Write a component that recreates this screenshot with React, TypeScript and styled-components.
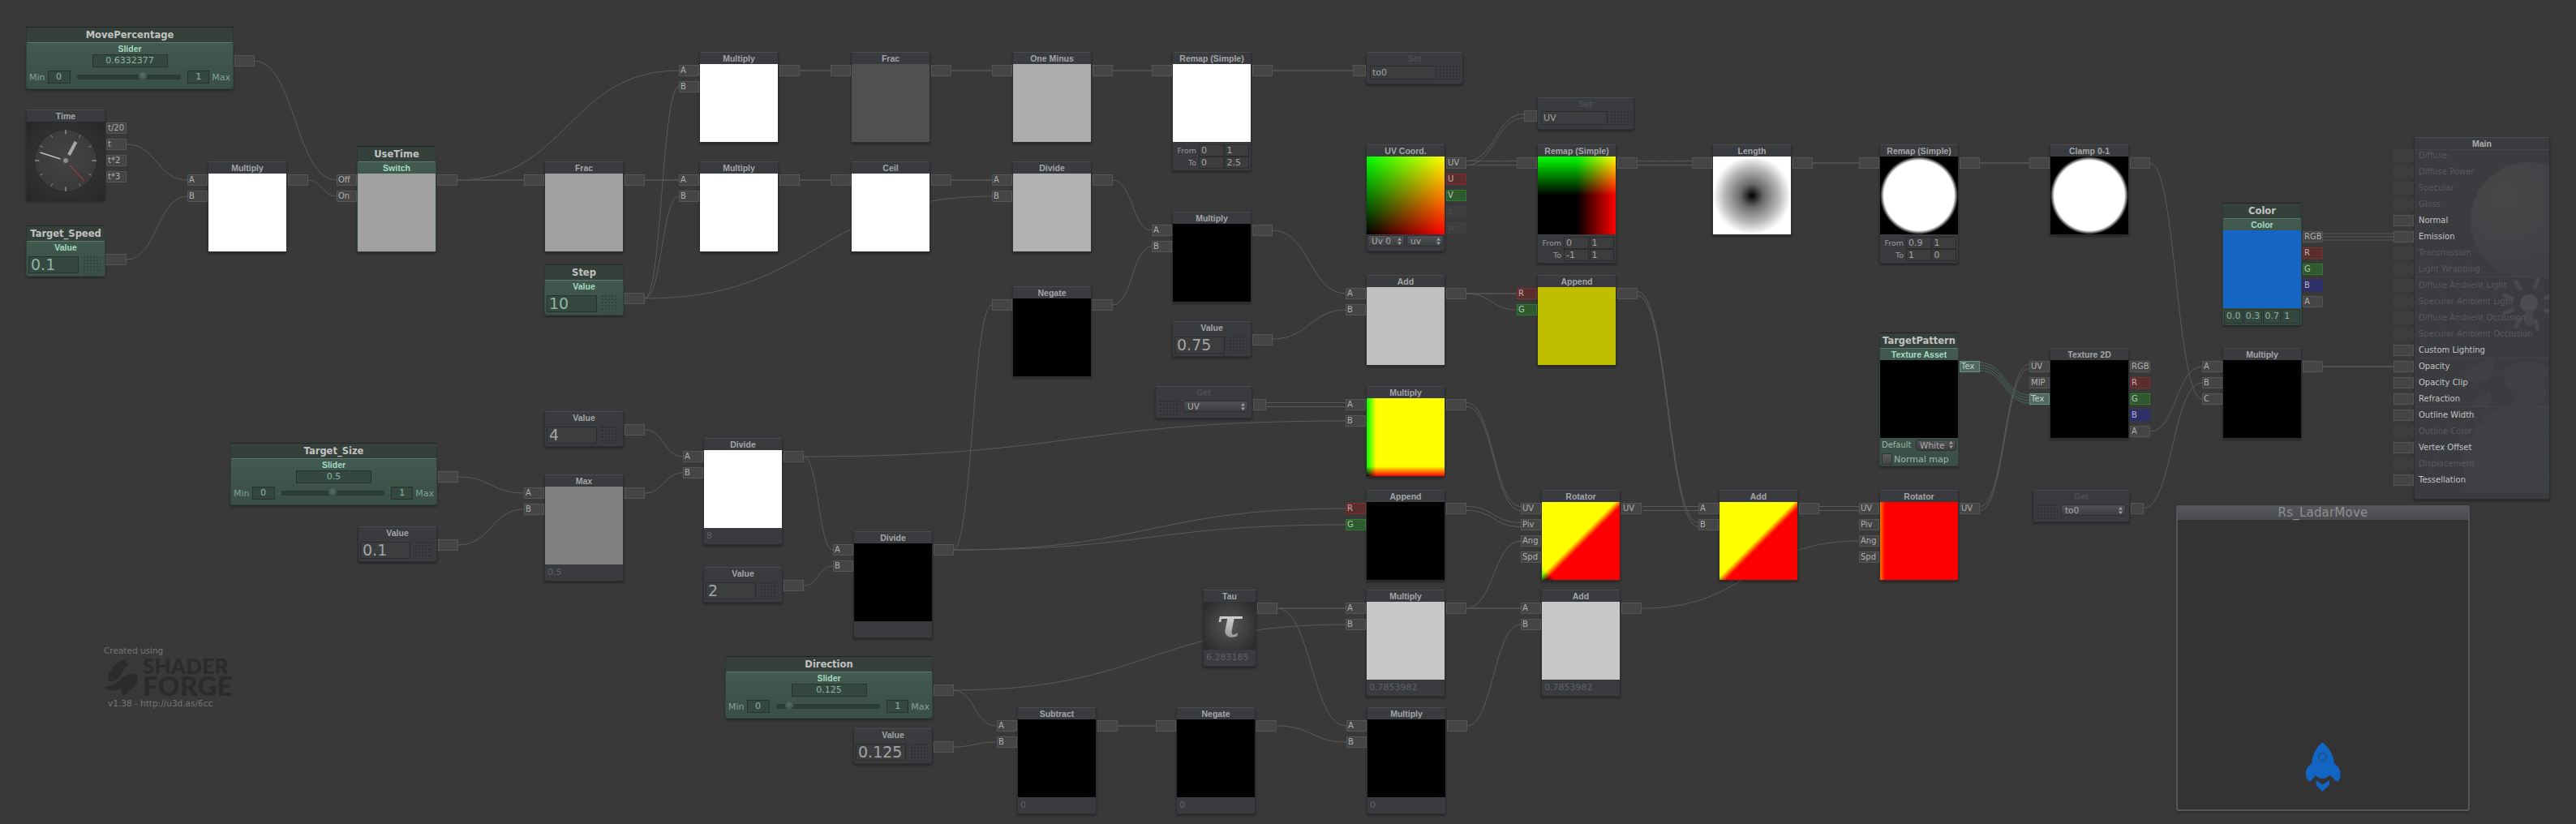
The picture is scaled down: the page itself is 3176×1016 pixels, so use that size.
import React from "react";
import styled, { createGlobalStyle, css } from "styled-components";

const Global = createGlobalStyle`
  html, body {
    margin: 0;
    background: #393939;
  }
`;

const Canvas = styled.div`
  position: relative;
  width: 3176px;
  height: 1016px;
  overflow: hidden;
  background: #393939;
  font-family: "DejaVu Sans", sans-serif;
  font-size: 10px;
  color: #a8a8a8;
`;

const WireLayer = styled.svg`
  position: absolute;
  left: 0;
  top: 0;
`;

const Card = styled.div<{ $x: number; $y: number; $w?: number; $prop?: boolean }>`
  position: absolute;
  left: ${(p) => p.$x}px;
  top: ${(p) => p.$y}px;
  width: ${(p) => p.$w ?? 98}px;
  box-sizing: border-box;
  border: 1px solid #2e2f31;
  border-top-color: #4a4c50;
  border-radius: 3px;
  background: #393b3f;
  box-shadow: 0 2px 3px rgba(0, 0, 0, 0.35);
  ${(p) =>
    p.$prop &&
    css`
      border-color: #32463f;
      border-top-color: #5d7a70;
      background: linear-gradient(#42594f, #3a4f47);
    `}
`;

const TitleBar = styled.div`
  position: absolute;
  left: -1px;
  right: -1px;
  bottom: 100%;
  margin-bottom: 1px;
  height: 19px;
  box-sizing: border-box;
  border-top: 1px solid #1f2522;
  border-left: 1px solid #2e3632;
  border-right: 1px solid #2e3632;
  background: #36403b;
  color: #c2c2c2;
  font-weight: bold;
  font-size: 11.5px;
  line-height: 19px;
  text-align: center;
  white-space: nowrap;
`;

const Head = styled.div<{ $prop?: boolean; $dim?: boolean }>`
  height: 14px;
  line-height: 14px;
  text-align: center;
  white-space: nowrap;
  font-family: "Liberation Sans", sans-serif;
  font-weight: bold;
  font-size: 10.5px;
  color: ${(p) => (p.$prop ? "#a5dcc4" : p.$dim ? "#4d4f53" : "#a4a5a7")};
`;

const Preview = styled.div<{ $bg: string; $blend?: boolean }>`
  height: 96px;
  background: ${(p) => p.$bg};
  ${(p) => p.$blend && "background-blend-mode: screen;"}
`;

const FootNote = styled.div`
  height: 20px;
  padding-left: 3px;
  line-height: 20px;
  font-size: 11px;
  color: #5f6164;
  white-space: nowrap;
`;

const Ports = styled.div<{ $side: "in" | "out" }>`
  position: absolute;
  top: 15px;
  display: flex;
  flex-direction: column;
  gap: 6px;
  ${(p) => (p.$side === "in" ? "right: calc(100% + 1px);" : "left: calc(100% + 2px);")}
`;

const toneStyles: Record<string, string> = {
  plain: "background:#454545;border-color:#555;color:#b0b0b0;",
  red: "background:#5b2d2d;border-color:#7b2f2f;color:#c4b0b0;",
  green: "background:#2f5a30;border-color:#2d7d2f;color:#b4c8b4;",
  blue: "background:#2d2f66;border-color:#2a2e82;color:#b4b4cc;",
  dim: "background:#3d3d3d;border-color:#414141;color:#505050;",
  tex: "background:#4e6a60;border-color:#6f8f83;color:#c4d0cb;",
};

const Port = styled.div<{ $tone?: string; $narrow?: boolean }>`
  box-sizing: border-box;
  width: ${(p) => (p.$narrow ? 16 : 25)}px;
  height: 14px;
  padding-left: 1px;
  border: 1px solid;
  line-height: 12px;
  font-size: 10px;
  white-space: nowrap;
  ${(p) => toneStyles[p.$tone ?? "plain"]}
`;

const Rows = styled.div`
  display: flex;
  flex-direction: column;
  box-sizing: border-box;
  padding-top: 3px;
  height: 35px;
`;

const RemapRow = styled.div`
  display: flex;
  align-items: center;
  gap: 1px;
  padding-right: 2px;
`;

const RemapLabel = styled.span`
  width: 31px;
  padding-right: 2px;
  box-sizing: border-box;
  text-align: right;
  font-size: 9.5px;
  color: #9a9a9a;
`;

const Field = styled.div<{ $prop?: boolean; $w?: number; $h?: number; $size?: number; $center?: boolean }>`
  box-sizing: border-box;
  flex: ${(p) => (p.$w ? "none" : 1)};
  width: ${(p) => (p.$w ? `${p.$w}px` : "auto")};
  height: ${(p) => p.$h ?? 15}px;
  padding-left: ${(p) => (p.$center ? 0 : 2)}px;
  border: 1px solid ${(p) => (p.$prop ? "#25322d" : "#2a2b2d")};
  background: ${(p) => (p.$prop ? "#354840" : "#3c3d3f")};
  color: ${(p) => (p.$prop ? "#8db5a3" : "#a4a4a4")};
  font-size: ${(p) => p.$size ?? 11}px;
  line-height: ${(p) => (p.$h ?? 15) - 2}px;
  text-align: ${(p) => (p.$center ? "center" : "left")};
  white-space: nowrap;
`;

const ValueRow = styled.div`
  display: flex;
  height: 28px;
  padding: 4px 5px 3px 2px;
  box-sizing: border-box;
  gap: 6px;
`;

const SetRow = styled.div<{ $flip?: boolean }>`
  display: flex;
  gap: 4px;
  height: 24px;
  box-sizing: border-box;
  padding: 2px 3px 3px 4px;
  ${(p) => p.$flip && "padding: 3px 4px 3px 5px;"}
`;

const Dots = styled.div<{ $prop?: boolean; $w: number }>`
  flex: none;
  width: ${(p) => p.$w}px;
  background-image: radial-gradient(circle at 1px 1px, ${(p) => (p.$prop ? "#2f433b" : "#2e2f31")} 0.8px, transparent 1px);
  background-size: 4px 4px;
`;

const Dropdown = styled.div<{ $w?: number }>`
  display: flex;
  align-items: center;
  justify-content: space-between;
  box-sizing: border-box;
  flex: ${(p) => (p.$w ? "none" : 1)};
  width: ${(p) => (p.$w ? `${p.$w}px` : "auto")};
  height: 14px;
  padding: 0 3px 0 4px;
  border: 1px solid #2e2f31;
  border-radius: 3px;
  background: linear-gradient(#505154, #3d3e40);
  color: #ababab;
  font-size: 10.5px;
  line-height: 12px;
  white-space: nowrap;
`;

const UvFoot = styled.div`
  display: flex;
  gap: 2px;
  height: 20px;
  padding: 1px 1px 0;
  box-sizing: border-box;
`;

const ColorFoot = styled.div`
  display: flex;
  gap: 1px;
  height: 20px;
  padding: 1px 1px 0;
  box-sizing: border-box;
`;

const TextureFoot = styled.div`
  display: flex;
  flex-direction: column;
  height: 34px;
  padding: 1px 2px 0 2px;
  box-sizing: border-box;
  color: #9fb6ac;
`;

const TextureRow = styled.div`
  display: flex;
  align-items: center;
  justify-content: space-between;
  height: 15px;
`;

const CheckRow = styled.div`
  display: flex;
  align-items: center;
  gap: 2px;
  margin-top: 3px;
  font-size: 11px;
`;

const CheckBox = styled.span`
  width: 11px;
  height: 12px;
  border: 1px solid #2d3330;
  border-radius: 2px;
  background: linear-gradient(#5a5c5e, #434547);
`;

const SliderBody = styled.div`
  display: flex;
  flex-direction: column;
  align-items: center;
  height: 42px;
  box-sizing: border-box;
`;

const SliderRow = styled.div`
  align-self: stretch;
  display: flex;
  align-items: center;
  gap: 3px;
  margin-top: 4px;
  padding: 0 3px;
  color: #7ea494;
  font-size: 11px;
`;

const Track = styled.div`
  position: relative;
  flex: 1;
  height: 4px;
  margin: 0 5px;
  border-radius: 2px;
  background: #2d3d37;
  border: 1px solid #2a3833;
`;

const Knob = styled.div<{ $at: number }>`
  position: absolute;
  top: -4px;
  left: calc(${(p) => p.$at * 100}% - 5px);
  width: 10px;
  height: 10px;
  border-radius: 50%;
  background: radial-gradient(circle at 50% 35%, #587066, #34453e);
`;

const ClockFace = styled.div`
  height: 96px;
  background: radial-gradient(circle at 50% 50%, #3f3f3f, #262626);
`;

const TauFace = styled.div`
  display: flex;
  align-items: center;
  justify-content: center;
  height: 59px;
  background: radial-gradient(circle, #525252 10%, #2c2c2c 90%);
`;

const TauGlyph = styled.span`
  font-family: "DejaVu Serif", serif;
  font-weight: bold;
  font-style: italic;
  font-size: 48px;
  line-height: 1;
  margin-top: -8px;
  color: transparent;
  background: linear-gradient(#f4f4f4, #8c8c8c);
  -webkit-background-clip: text;
  background-clip: text;
`;

const MainPanel = styled(Card)`
  background: #3a3c3f;
`;

const MainArt = styled.svg`
  position: absolute;
  left: 0;
  top: 0;
`;

const MainHead = styled(Head)`
  position: relative;
  color: #b0b0b0;
`;

const MainRows = styled.div`
  position: relative;
  padding: 1px 0 10px 5px;
`;

const MainRow = styled.div<{ $on?: boolean }>`
  height: 20px;
  line-height: 14px;
  white-space: nowrap;
  color: ${(p) => (p.$on ? "#c4c4c4" : "#585a5d")};
`;

const Monitor = styled.div`
  position: absolute;
  left: 2683px;
  top: 623px;
  width: 362px;
  height: 377px;
  box-sizing: border-box;
  display: flex;
  flex-direction: column;
  border: 2px solid #55565a;
  border-radius: 3px;
  background: #333;
  box-shadow: 0 1px 3px rgba(0, 0, 0, 0.3);
`;

const MonitorHead = styled.div`
  height: 16px;
  line-height: 14px;
  text-align: center;
  background: linear-gradient(#55565a, #4a4b4e);
  color: #8e8f90;
  font-size: 15px;
  letter-spacing: 0.2px;
`;

const MonitorBody = styled.div`
  flex: 1;
  display: flex;
  align-items: flex-end;
  justify-content: center;
  padding: 0 0 21px 0;
`;

const Credit = styled.div`
  position: absolute;
  left: 128px;
  top: 796px;
  width: 170px;
  color: #757575;
  font-size: 10.5px;
`;

const LogoRow = styled.div`
  display: flex;
  gap: 4px;
  margin: 3px 0 2px;
`;

const LogoText = styled.div`
  display: flex;
  flex-direction: column;
  color: #2b2b2b;
  font-family: "Lato", sans-serif;
  font-weight: 900;
`;

const LogoShader = styled.span`
  font-size: 26px;
  line-height: 21px;
  letter-spacing: 0.2px;
`;

const LogoForge = styled.span`
  font-size: 33px;
  line-height: 27px;
  letter-spacing: 0.4px;
`;

const CreditUrl = styled.div`
  padding-left: 5px;
  white-space: nowrap;
`;

const SpinnerIcon = () => (
  <svg width="5" height="9" viewBox="0 0 5 9">
    <path d="M2.5 0 L5 3.5 H0 Z M2.5 9 L0 5.5 H5 Z" fill="#a0a0a0" />
  </svg>
);

type P = { l?: string; t?: string; n?: boolean };

const PortList = ({ side, items }: { side: "in" | "out"; items: P[] }) => (
  <Ports $side={side}>
    {items.map((it, i) => (
      <Port key={i} $tone={it.t} $narrow={it.n}>
        {it.l}
      </Port>
    ))}
  </Ports>
);

const p = (l?: string, t?: string): P => ({ l, t });
const AB = [p("A"), p("B")];
const IN = [p()];
const OUT = [p()];
const RG = [p("R", "red"), p("G", "green")];
const ROT = [p("UV"), p("Piv"), p("Ang"), p("Spd")];

type NodeProps = {
  x: number;
  y: number;
  head: string;
  bg: string;
  blend?: boolean;
  inputs?: P[];
  outputs?: P[];
  foot?: string;
  prop?: string;
  children?: React.ReactNode;
};

const ShaderNode = ({ x, y, head, bg, blend, inputs, outputs = OUT, foot, prop, children }: NodeProps) => (
  <Card $x={x} $y={y} $prop={!!prop}>
    {prop && <TitleBar>{prop}</TitleBar>}
    <Head $prop={!!prop}>{head}</Head>
    <Preview $bg={bg} $blend={blend} />
    {foot !== undefined && <FootNote>{foot}</FootNote>}
    {children}
    {inputs && <PortList side="in" items={inputs} />}
    {outputs.length > 0 && <PortList side="out" items={outputs} />}
  </Card>
);

const Remap = ({ x, y, bg, blend, vals }: { x: number; y: number; bg: string; blend?: boolean; vals: string[] }) => (
  <ShaderNode x={x} y={y} head="Remap (Simple)" bg={bg} blend={blend} inputs={IN}>
    <Rows>
      <RemapRow>
        <RemapLabel>From</RemapLabel>
        <Field>{vals[0]}</Field>
        <Field>{vals[1]}</Field>
      </RemapRow>
      <RemapRow>
        <RemapLabel>To</RemapLabel>
        <Field>{vals[2]}</Field>
        <Field>{vals[3]}</Field>
      </RemapRow>
    </Rows>
  </ShaderNode>
);

const ValueNode = ({ x, y, value, name }: { x: number; y: number; value: string; name?: string }) => (
  <Card $x={x} $y={y} $prop={!!name}>
    {name && <TitleBar>{name}</TitleBar>}
    <Head $prop={!!name}>Value</Head>
    <ValueRow>
      <Field $prop={!!name} $w={62} $h={21} $size={19}>
        {value}
      </Field>
      <Dots $prop={!!name} $w={21} />
    </ValueRow>
    <PortList side="out" items={OUT} />
  </Card>
);

const SliderNode = ({ x, y, w, name, value, at }: { x: number; y: number; w: number; name: string; value: string; at: number }) => (
  <Card $x={x} $y={y} $w={w} $prop>
    <TitleBar>{name}</TitleBar>
    <Head $prop>Slider</Head>
    <SliderBody>
      <Field $prop $w={93} $h={16} $center>
        {value}
      </Field>
      <SliderRow>
        Min
        <Field $prop $w={28} $h={16} $center>
          0
        </Field>
        <Track>
          <Knob $at={at} />
        </Track>
        <Field $prop $w={27} $h={16} $center>
          1
        </Field>
        Max
      </SliderRow>
    </SliderBody>
    <PortList side="out" items={OUT} />
  </Card>
);

const SetNode = ({ x, y, value }: { x: number; y: number; value: string }) => (
  <Card $x={x} $y={y} $w={120}>
    <Head $dim>Set</Head>
    <SetRow>
      <Field $w={82} $h={17}>
        {value}
      </Field>
      <Dots $w={25} />
    </SetRow>
    <PortList side="in" items={[{ n: true }]} />
  </Card>
);

const GetNode = ({ x, y, value }: { x: number; y: number; value: string }) => (
  <Card $x={x} $y={y} $w={120}>
    <Head $dim>Get</Head>
    <SetRow $flip>
      <Dots $w={25} />
      <Dropdown>
        {value}
        <SpinnerIcon />
      </Dropdown>
    </SetRow>
    <PortList side="out" items={[{ n: true }]} />
  </Card>
);

const ClockDrawing = () => (
  <svg width="96" height="96" viewBox="0 0 96 96">
    <defs>
      <radialGradient id="dial" cx="50%" cy="45%" r="55%">
        <stop offset="0" stopColor="#444" />
        <stop offset="1" stopColor="#3a3a3a" />
      </radialGradient>
    </defs>
    <circle cx="48" cy="48" r="38.5" fill="url(#dial)" stroke="#2c2c2c" strokeWidth="1.5" />
    {Array.from({ length: 12 }).map((_, i) => (
      <line
        key={i}
        x1="48"
        y1={i % 3 === 0 ? 10 : 11.5}
        x2="48"
        y2="15.5"
        stroke={i % 3 === 0 ? "#b4b4b4" : "#7c7c7c"}
        strokeWidth="1"
        transform={`rotate(${i * 30} 48 48)`}
      />
    ))}
    <line x1="52" y1="41" x2="60.5" y2="25" stroke="#a8a8a8" strokeWidth="4" />
    <line x1="41.5" y1="46" x2="16.5" y2="38" stroke="#bbb" strokeWidth="1.8" />
    <line x1="53" y1="54" x2="71" y2="73" stroke="#cc3a3a" strokeWidth="1" />
    <circle cx="48" cy="48" r="3" fill="#8a8a8a" />
  </svg>
);

const MainDrawing = () => (
  <MainArt width="166" height="438" viewBox="0 0 166 438">
    <defs>
      <radialGradient id="ball" cx="30%" cy="30%" r="80%">
        <stop offset="0" stopColor="#454749" />
        <stop offset="1" stopColor="#3d3f42" />
      </radialGradient>
      <clipPath id="c1">
        <rect x="0" y="15" width="166" height="156" />
      </clipPath>
      <clipPath id="c2">
        <rect x="0" y="172" width="166" height="99" />
      </clipPath>
      <clipPath id="c3">
        <rect x="0" y="272" width="166" height="59" />
      </clipPath>
      <clipPath id="c4">
        <rect x="0" y="332" width="166" height="106" />
      </clipPath>
    </defs>
    <circle cx="141" cy="102" r="72" fill="url(#ball)" clipPath="url(#c1)" />
    <g clipPath="url(#c2)" stroke="#484a4d" strokeLinecap="round">
      {[-110, -70, -30, 20, 70, 110, 160, -150].map((a) => (
        <line key={a} x1="141" y1="183" x2="141" y2="173" strokeWidth="5" transform={`rotate(${a} 141 205)`} />
      ))}
      <circle cx="141" cy="204" r="11" fill="#4b4d50" stroke="none" />
      <rect x="136" y="212" width="10" height="20" rx="4" fill="#45474a" stroke="none" />
    </g>
    <g clipPath="url(#c3)" fill="#3f4144">
      <path d="M60 295 C70 278 85 276 98 272 C100 288 92 300 74 304 Z" />
      <path d="M110 286 C125 272 150 272 166 285 C160 310 130 318 112 306 Z" />
      <path d="M70 331 C78 318 86 316 92 312 C98 322 96 328 90 331 Z" />
      <path d="M120 331 C124 310 140 302 160 304 C166 318 160 326 150 331 Z" />
    </g>
    <g clipPath="url(#c4)" fill="none" stroke="#47494c" strokeWidth="0.6">
      <circle cx="150" cy="410" r="90" fill="#3e4043" stroke="none" />
      {Array.from({ length: 9 }).map((_, i) => (
        <path key={i} d={`M${70 + i * 12} 335 Q ${95 + i * 12} 395 ${60 + i * 14} 438`} />
      ))}
      {Array.from({ length: 9 }).map((_, i) => (
        <path key={i} d={`M60 ${350 + i * 12} Q 120 ${330 + i * 12} 166 ${370 + i * 10}`} />
      ))}
    </g>
    <path d="M0 171.5H166M0 271.5H166M0 331.5H166M0 14.5H166" stroke="#434549" strokeWidth="1" />
  </MainArt>
);

const MAIN_ROWS: [string, boolean][] = [
  ["Diffuse", false],
  ["Diffuse Power", false],
  ["Specular", false],
  ["Gloss", false],
  ["Normal", true],
  ["Emission", true],
  ["Transmission", false],
  ["Light Wrapping", false],
  ["Diffuse Ambient Light", false],
  ["Specular Ambient Light", false],
  ["Diffuse Ambient Occlusion", false],
  ["Specular Ambient Occlusion", false],
  ["Custom Lighting", true],
  ["Opacity", true],
  ["Opacity Clip", true],
  ["Refraction", true],
  ["Outline Width", true],
  ["Outline Color", false],
  ["Vertex Offset", true],
  ["Displacement", false],
  ["Tessellation", true],
];

const LogoMark = () => (
  <svg width="44" height="48" viewBox="0 0 44 48">
    <path
      d="M36 2 C24 1 15 6 10 14 C5 20 3 26 7 29 C12 31 19 26 22 20 C24 15 25 11 30 9 L36 2 Z M26 1 L36 2 L29 8 Z"
      fill="#2b2b2b"
    />
    <path
      d="M0 36 C8 35 14 33 20 27 C26 21 34 18 40 21 C44 25 42 32 36 37 C30 42 27 46 24 47 L21 38 C14 42 6 41 0 36 Z"
      fill="#2b2b2b"
    />
  </svg>
);

const RocketIcon = () => (
  <svg width="44" height="63" viewBox="0 0 44 63">
    <path
      d="M21.3 1 C14 7 8 17 8 30 C8 38 14 46 21.3 46 C29 46 36 38 36 30 C36 17 29 7 21.3 1 Z"
      fill="#1365c4"
    />
    <path d="M8 27 C3 31 0 35 1 42 C2 48 4 50 7 49 L13 42 Z" fill="#1365c4" />
    <path d="M36 27 C41 31 44 35 43.5 42 C43 48 41 50 38 49 L31 42 Z" fill="#1365c4" />
    <path d="M13.5 48 L21.3 53.5 L30 48 L30 54 L21 62 L13.5 54 Z" fill="#1365c4" />
    <circle cx="21.5" cy="19.5" r="4.8" fill="none" stroke="#2a3f5c" strokeWidth="1" />
  </svg>
);

// wires, as [from x, from y, to x, to y, lines]
const WIRES: number[][] = [
  [313, 75, 415, 222, 1],
  [156, 178, 231, 222, 1],
  [156, 320, 231, 242, 1],
  [380, 222, 415, 242, 1],
  [564, 222, 837, 87, 1],
  [564, 222, 646, 222, 1],
  [795, 222, 837, 222, 1],
  [795, 368, 837, 107, 1],
  [795, 368, 837, 242, 1],
  [795, 368, 1223, 242, 1],
  [986, 87, 1024, 87, 1],
  [1172, 87, 1223, 87, 1],
  [1372, 87, 1420, 87, 1],
  [1569, 87, 1668, 87, 1],
  [986, 222, 1024, 222, 1],
  [1172, 222, 1223, 222, 1],
  [1372, 222, 1420, 284, 1],
  [1372, 376, 1420, 304, 1],
  [1569, 284, 1660, 362, 1],
  [1569, 418, 1660, 382, 1],
  [1808, 201, 1879, 143, 2],
  [1808, 201, 1870, 201, 2],
  [2019, 201, 2087, 201, 2],
  [2235, 201, 2292, 201, 1],
  [2441, 201, 2502, 201, 1],
  [2651, 201, 2715, 492, 1],
  [1808, 362, 1870, 362, 1],
  [1808, 362, 1870, 382, 1],
  [2019, 362, 2094, 647, 2],
  [1560, 499, 1660, 499, 2],
  [991, 563, 1660, 519, 1],
  [565, 588, 646, 608, 1],
  [565, 672, 646, 628, 1],
  [795, 530, 842, 563, 1],
  [795, 608, 842, 583, 1],
  [991, 563, 1027, 678, 1],
  [991, 722, 1027, 698, 1],
  [1175, 678, 1660, 627, 1],
  [1175, 678, 1660, 647, 1],
  [1175, 678, 1223, 376, 1],
  [1175, 851, 1660, 770, 1],
  [1175, 851, 1228, 895, 1],
  [1175, 921, 1228, 915, 1],
  [1377, 895, 1425, 895, 1],
  [1575, 895, 1660, 915, 1],
  [1574, 750, 1660, 750, 1],
  [1574, 750, 1660, 895, 1],
  [1808, 499, 1875, 627, 2],
  [1808, 627, 1875, 647, 2],
  [1808, 750, 1875, 667, 1],
  [1808, 750, 1875, 750, 1],
  [1808, 895, 1875, 770, 1],
  [2025, 627, 2094, 627, 2],
  [2243, 627, 2292, 627, 2],
  [2025, 750, 2292, 667, 1],
  [2441, 627, 2502, 452, 2],
  [2651, 532, 2715, 452, 1],
  [2642, 627, 2715, 472, 1],
  [2863, 292, 2951, 292, 3],
  [2863, 452, 2951, 452, 1],
];

const wirePath = (x1: number, y1: number, x2: number, y2: number) => {
  const mid = (x1 + x2) / 2;
  return `M${x1} ${y1} C${mid} ${y1} ${mid} ${y2} ${x2} ${y2}`;
};

const Wires = () => (
  <WireLayer width="3176" height="1016" viewBox="0 0 3176 1016" fill="none">
    {WIRES.map(([x1, y1, x2, y2, n], i) =>
      Array.from({ length: n }).map((_, k) => {
        const off = n === 1 ? 0 : (k - (n - 1) / 2) * (n === 2 ? 5 : 4);
        const straight = y1 === y2 && n === 1;
        return (
          <path
            key={`${i}-${k}`}
            d={wirePath(x1, y1 + off, x2, y2 + off)}
            stroke={straight ? "#505050" : "#5a5a5a"}
            strokeWidth={straight ? 2 : 1}
          />
        );
      })
    )}
    {[-5, -1.7, 1.7, 5].map((off) => (
      <path key={off} d={wirePath(2441, 452 + off, 2502, 492 + off)} stroke="#4a675c" strokeWidth="1" />
    ))}
  </WireLayer>
);

const WHITE = "#fff";
const BLACK = "#000";

const UV_BG = "linear-gradient(to top, #000, #0f0), linear-gradient(to right, #000, #f00)";
const REMAP_BG = "linear-gradient(to top, #000 50%, #0f0), linear-gradient(to right, #000 50%, #f00)";
const LENGTH_BG = "radial-gradient(circle closest-side, #000 0, #6c6c6c 30%, #b8b8b8 70%, #fff 100%)";
const DISC_BG = "radial-gradient(circle closest-side, #fff 90%, #000 100%)";
const TINT_BG = "linear-gradient(to top, #000, #0f0 12.5%), linear-gradient(to right, #000, #f00 12.5%)";
const ROT_BG = "linear-gradient(315deg, #000 47%, #0f0 53%), linear-gradient(45deg, #000 0, #f00 9%)";
const ADD_BG = "linear-gradient(315deg, #000 46%, #0f0 52%), linear-gradient(45deg, #a00 0, #f00 4%)";
const ROT2_BG = "linear-gradient(to right, #f70 0, #f00 6px)";

export default function App() {
  return (
    <Canvas>
      <Global />
      <Wires />

      <SliderNode x={32} y={52} w={256} name="MovePercentage" value="0.6332377" at={0.6332377} />

      <Card $x={32} $y={135}>
        <Head>Time</Head>
        <ClockFace>
          <ClockDrawing />
        </ClockFace>
        <PortList side="out" items={[p("t/20"), p("t"), p("t*2"), p("t*3")]} />
      </Card>

      <ValueNode x={32} y={297} value="0.1" name="Target_Speed" />

      <ShaderNode x={256} y={199} head="Multiply" bg={WHITE} inputs={AB} />
      <ShaderNode x={440} y={199} head="Switch" bg="#a0a0a0" prop="UseTime" inputs={[p("Off"), p("On")]} />
      <ShaderNode x={671} y={199} head="Frac" bg="#a0a0a0" inputs={IN} />
      <ValueNode x={671} y={345} value="10" name="Step" />

      <ShaderNode x={862} y={64} head="Multiply" bg={WHITE} inputs={AB} />
      <ShaderNode x={862} y={199} head="Multiply" bg={WHITE} inputs={AB} />
      <ShaderNode x={1049} y={64} head="Frac" bg="#505050" inputs={IN} />
      <ShaderNode x={1049} y={199} head="Ceil" bg={WHITE} inputs={IN} />
      <ShaderNode x={1248} y={64} head="One Minus" bg="#acacac" inputs={IN} />
      <ShaderNode x={1248} y={199} head="Divide" bg="#b2b2b2" inputs={AB} />
      <ShaderNode x={1248} y={353} head="Negate" bg={BLACK} inputs={IN} />

      <Remap x={1445} y={64} bg={WHITE} vals={["0", "1", "0", "2.5"]} />
      <SetNode x={1684} y={64} value="to0" />
      <ShaderNode x={1445} y={261} head="Multiply" bg={BLACK} inputs={AB} />
      <ValueNode x={1445} y={396} value="0.75" />

      <ShaderNode
        x={1684}
        y={178}
        head="UV Coord."
        bg={UV_BG}
        blend
        outputs={[p("UV"), p("U", "red"), p("V", "green"), p("z", "dim"), p("w", "dim")]}
      >
        <UvFoot>
          <Dropdown>
            Uv 0
            <SpinnerIcon />
          </Dropdown>
          <Dropdown>
            uv
            <SpinnerIcon />
          </Dropdown>
        </UvFoot>
      </ShaderNode>
      <ShaderNode x={1684} y={339} head="Add" bg="#bfbfbf" inputs={AB} />

      <SetNode x={1895} y={120} value="UV" />
      <Remap x={1895} y={178} bg={REMAP_BG} blend vals={["0", "1", "-1", "1"]} />
      <ShaderNode x={1895} y={339} head="Append" bg="#bfbf00" inputs={RG} />
      <ShaderNode x={2111} y={178} head="Length" bg={LENGTH_BG} inputs={IN} />
      <Remap x={2317} y={178} bg={DISC_BG} vals={["0.9", "1", "1", "0"]} />
      <ShaderNode x={2527} y={178} head="Clamp 0-1" bg={DISC_BG} inputs={IN} />

      <ShaderNode
        x={2740}
        y={269}
        head="Color"
        bg="#1465c4"
        prop="Color"
        outputs={[p("RGB"), p("R", "red"), p("G", "green"), p("B", "blue"), p("A")]}
      >
        <ColorFoot>
          {["0.0", "0.3", "0.7", "1"].map((v) => (
            <Field key={v} $prop $h={18}>
              {v}
            </Field>
          ))}
        </ColorFoot>
      </ShaderNode>

      <ShaderNode
        x={2317}
        y={429}
        head="Texture Asset"
        bg={BLACK}
        prop="TargetPattern"
        outputs={[p("Tex", "tex")]}
      >
        <TextureFoot>
          <TextureRow>
            Default
            <Dropdown $w={50}>
              White
              <SpinnerIcon />
            </Dropdown>
          </TextureRow>
          <CheckRow>
            <CheckBox />
            Normal map
          </CheckRow>
        </TextureFoot>
      </ShaderNode>
      <ShaderNode
        x={2527}
        y={429}
        head="Texture 2D"
        bg={BLACK}
        inputs={[p("UV"), p("MIP"), p("Tex", "tex")]}
        outputs={[p("RGB"), p("R", "red"), p("G", "green"), p("B", "blue"), p("A")]}
      />
      <ShaderNode x={2740} y={429} head="Multiply" bg={BLACK} inputs={[p("A"), p("B"), p("C")]} />

      <MainPanel $x={2976} $y={169} $w={168}>
        <MainDrawing />
        <MainHead>Main</MainHead>
        <MainRows>
          {MAIN_ROWS.map(([label, on]) => (
            <MainRow key={label} $on={on}>
              {label}
            </MainRow>
          ))}
        </MainRows>
        <PortList side="in" items={MAIN_ROWS.map(([, on]) => p("", on ? "plain" : "dim"))} />
      </MainPanel>

      <SliderNode x={284} y={565} w={255} name="Target_Size" value="0.5" at={0.5} />
      <ValueNode x={441} y={649} value="0.1" />
      <ValueNode x={671} y={507} value="4" />
      <ShaderNode x={671} y={585} head="Max" bg="#808080" inputs={AB} foot="0.5" />
      <ShaderNode x={867} y={540} head="Divide" bg={WHITE} inputs={AB} foot="8" />
      <ValueNode x={867} y={699} value="2" />
      <ShaderNode x={1052} y={655} head="Divide" bg={BLACK} inputs={AB} foot="" />

      <SliderNode x={894} y={828} w={256} name="Direction" value="0.125" at={0.125} />
      <ValueNode x={1052} y={898} value="0.125" />
      <ShaderNode x={1254} y={872} head="Subtract" bg={BLACK} inputs={AB} foot="0" />
      <ShaderNode x={1450} y={872} head="Negate" bg={BLACK} inputs={IN} foot="0" />

      <Card $x={1483} $y={727} $w={66}>
        <Head>Tau</Head>
        <TauFace>
          <TauGlyph>τ</TauGlyph>
        </TauFace>
        <FootNote>6.283185</FootNote>
        <PortList side="out" items={OUT} />
      </Card>

      <GetNode x={1424} y={476} value="UV" />
      <ShaderNode x={1684} y={476} head="Multiply" bg={TINT_BG} blend inputs={AB} />
      <ShaderNode x={1684} y={604} head="Append" bg={BLACK} inputs={RG} />
      <ShaderNode x={1684} y={727} head="Multiply" bg="#c8c8c8" inputs={AB} foot="0.7853982" />
      <ShaderNode x={1685} y={872} head="Multiply" bg={BLACK} inputs={AB} foot="0" />

      <ShaderNode x={1900} y={604} head="Rotator" bg={ROT_BG} blend inputs={ROT} outputs={[p("UV")]} />
      <ShaderNode x={1900} y={727} head="Add" bg="#c8c8c8" inputs={AB} foot="0.7853982" />
      <ShaderNode x={2119} y={604} head="Add" bg={ADD_BG} blend inputs={AB} />
      <ShaderNode x={2317} y={604} head="Rotator" bg={ROT2_BG} inputs={ROT} outputs={[p("UV")]} />
      <GetNode x={2506} y={604} value="to0" />

      <Monitor>
        <MonitorHead>Rs_LadarMove</MonitorHead>
        <MonitorBody>
          <RocketIcon />
        </MonitorBody>
      </Monitor>

      <Credit>
        Created using
        <LogoRow>
          <LogoMark />
          <LogoText>
            <LogoShader>SHADER</LogoShader>
            <LogoForge>FORGE</LogoForge>
          </LogoText>
        </LogoRow>
        <CreditUrl>v1.38 - http://u3d.as/6cc</CreditUrl>
      </Credit>
    </Canvas>
  );
}
